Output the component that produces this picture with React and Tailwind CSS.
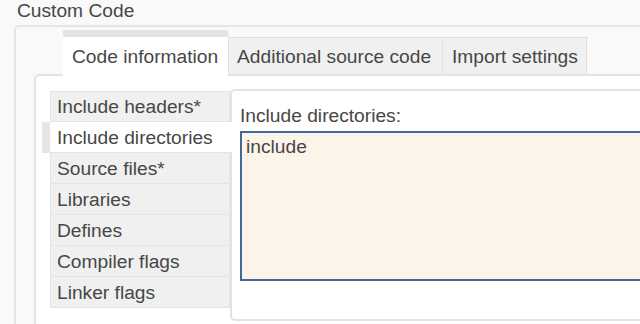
import React from "react";

const items = [
  "Include headers*",
  "Include directories",
  "Source files*",
  "Libraries",
  "Defines",
  "Compiler flags",
  "Linker flags",
];

export default function App() {
  return (
    <div
      className="w-[640px] h-[324px] overflow-hidden bg-[#f9f9f9] text-[#474747] text-[19.2px]"
      style={{ fontFamily: '"Liberation Sans", Arial, sans-serif' }}
    >
      <div className="h-[25px] pl-[17px] leading-[21px]">Custom Code</div>
      <div className="ml-[14px] w-[700px] h-[320px] border-2 border-[#e5e5e5] rounded-[5px] pl-[18px] pt-[3px]">
        {/* Tabs */}
        <div className="flex items-end ml-[29px] relative z-10">
          <div className="w-[165px] h-[46px] border-t-[7px] border-[#e3e3e3] bg-white pl-[9px] pt-[9px] leading-[22px] mb-[-2px]">
            Code information
          </div>
          <div className="w-[214px] h-[37px] border-t border-l border-[#e0e0e0] bg-[#f0f0f0] pl-[8px] pt-[8px] leading-[22px] whitespace-nowrap">
            Additional source code
          </div>
          <div className="w-[145px] h-[37px] border-t border-l border-r border-[#e0e0e0] bg-[#f0f0f0] pl-[9px] pt-[8px] leading-[22px] whitespace-nowrap">
            Import settings
          </div>
        </div>
        {/* Tab panel */}
        <div className="w-[680px] h-[300px] border-2 border-[#e3e3e3] rounded-tl-[5px] bg-white pl-[14px] pt-[13px] flex items-start">
          <div className="w-[180px] mt-[2px] flex flex-col relative z-10">
            {items.map((it, i) =>
              i === 1 ? (
                <div
                  key={it}
                  className="h-[31px] w-[190px] -ml-[8px] border-l-[8px] border-b border-b-[#e4e4e4] border-l-[#e6e6e6] bg-white pl-[7px] pt-[1px] leading-[30px] whitespace-nowrap"
                >
                  {it}
                </div>
              ) : i === 0 ? (
                <div
                  key={it}
                  className="h-[31px] border border-[#e4e4e4] bg-[#f0f0f0] pl-[6px] leading-[30px] whitespace-nowrap"
                >
                  {it}
                </div>
              ) : (
                <div
                  key={it}
                  className="h-[31px] border-b border-x border-[#e4e4e4] bg-[#f0f0f0] pl-[6px] pt-[1px] leading-[30px] whitespace-nowrap"
                >
                  {it}
                </div>
              )
            )}
          </div>
          <div className="w-[460px] h-[232px] border-2 border-[#e3e3e3] rounded-l-[5px] pl-[8px] pt-[14px]">
            <div className="leading-[22px]">Include directories:</div>
            <div className="mt-[4px] w-[440px] h-[150px] border-2 border-[#41699b] bg-[#fcf3e9] pl-[4px] pt-[3px] leading-[22px]">
              include
            </div>
          </div>
        </div>
      </div>
    </div>
  );
}
